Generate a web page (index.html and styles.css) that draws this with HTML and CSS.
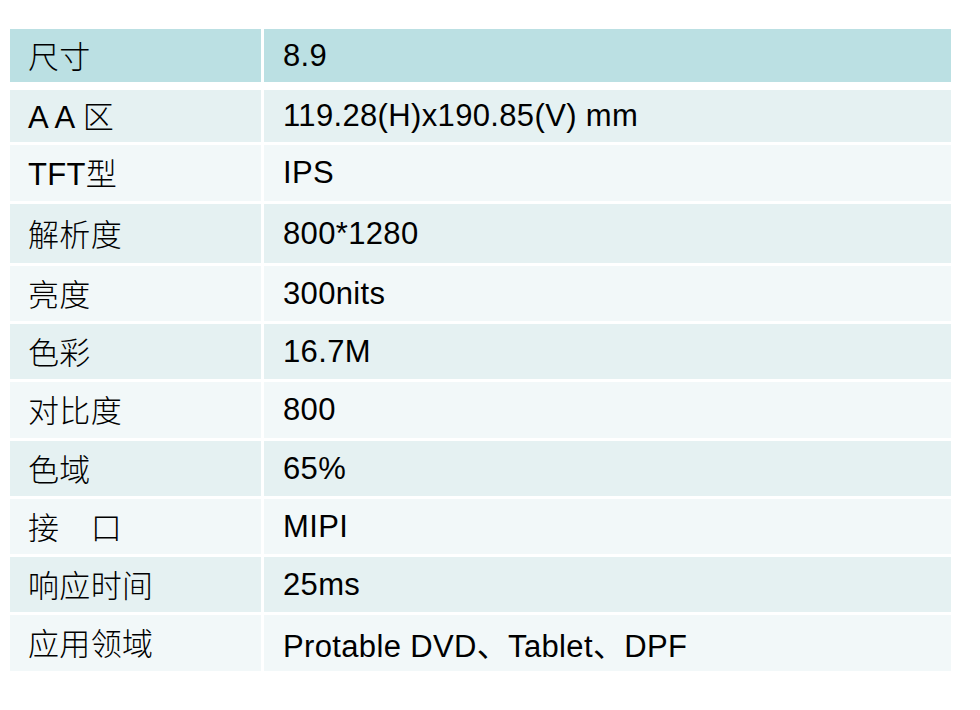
FILE: index.html
```html
<!DOCTYPE html>
<html lang="zh">
<head>
<meta charset="utf-8">
<title>规格</title>
<link rel="stylesheet" href="styles.css">
</head>
<body>
<div class="spec">
  <div class="row head"><div class="cell">尺寸</div><div class="cell">8.9</div></div>
  <div class="row odd"><div class="cell">A A 区</div><div class="cell">119.28(H)x190.85(V) mm</div></div>
  <div class="row even"><div class="cell">TFT型</div><div class="cell">IPS</div></div>
  <div class="row odd"><div class="cell">解析度</div><div class="cell">800*1280</div></div>
  <div class="row even"><div class="cell">亮度</div><div class="cell">300nits</div></div>
  <div class="row odd"><div class="cell">色彩</div><div class="cell">16.7M</div></div>
  <div class="row even"><div class="cell">对比度</div><div class="cell">800</div></div>
  <div class="row odd"><div class="cell">色域</div><div class="cell">65%</div></div>
  <div class="row even"><div class="cell">接　口</div><div class="cell">MIPI</div></div>
  <div class="row odd"><div class="cell">响应时间</div><div class="cell">25ms</div></div>
  <div class="row even"><div class="cell">应用领域</div><div class="cell">Protable DVD、Tablet、DPF</div></div>
</div>
</body>
</html>
```
FILE: styles.css
```css
html, body {
  margin: 0;
  padding: 0;
  background: #ffffff;
}
body {
  width: 980px;
  height: 710px;
  overflow: hidden;
  font-family: "Liberation Sans", "Noto Sans CJK SC", sans-serif;
  font-size: 31px;
  letter-spacing: 0.35px;
  color: #000000;
}
.spec {
  display: flex;
  flex-direction: column;
  gap: 3px;
  padding: 29px 0 0 10px;
}
.row {
  display: grid;
  grid-template-columns: 251px 687px;
  column-gap: 3px;
  height: 55px;
}
.cell {
  display: flex;
  align-items: center;
  padding-left: 19px;
  white-space: pre;
}
.cell:first-child {
  padding-left: 18px;
  font-weight: 300;
  padding-bottom: 3px;
}
.head { height: 53px; margin-bottom: 5px; }
.head .cell { background: #bbe0e3; }
.odd .cell { background: #e5f1f2; }
.even .cell { background: #f2f8f9; }
.row:nth-child(2) { height: 52px; }
.row:nth-child(3) { height: 56px; }
.row:nth-child(4) { height: 59px; }
.row:nth-child(7) { height: 56px; }
.row:nth-child(11) { height: 56px; }
```
